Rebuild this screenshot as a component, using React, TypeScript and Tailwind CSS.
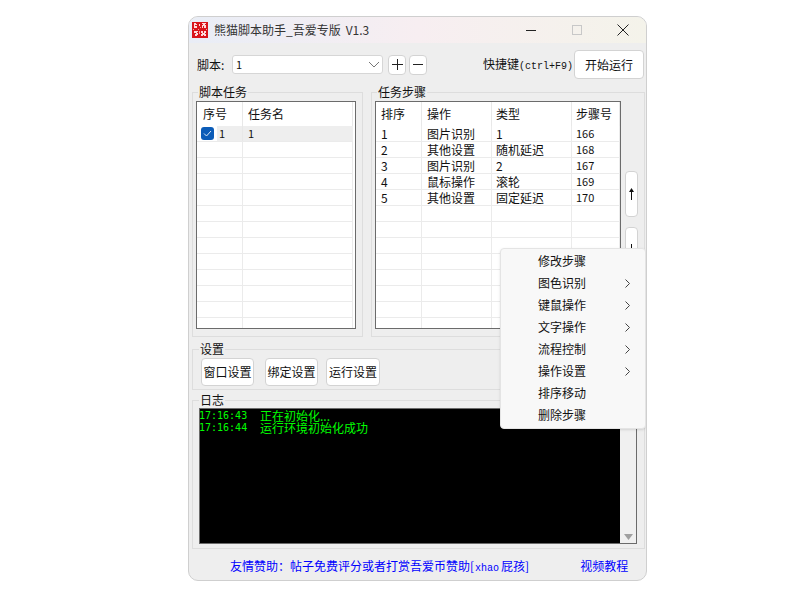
import React from "react";

const font = { fontFamily: '"Noto Sans CJK SC", "Liberation Sans", sans-serif' };
const mono = { fontFamily: '"Liberation Mono", monospace' };
const logMono = { fontFamily: '"DejaVu Sans Mono", monospace' };

function Legend({ children, className = "" }: { children: React.ReactNode; className?: string }) {
  return <legend className={"px-[1px] h-[14px] leading-[14px] text-[12px] text-[#111] " + className}>{children}</legend>;
}

function Btn({ children, className = "" }: { children?: React.ReactNode; className?: string }) {
  return (
    <button className={"flex items-center justify-center bg-white border border-[#d3d3d3] rounded-[4px] text-[12px] text-[#111] " + className}>
      {children}
    </button>
  );
}

const stepRows = [
  ["1", "图片识别", "1", "166"],
  ["2", "其他设置", "随机延迟", "168"],
  ["3", "图片识别", "2", "167"],
  ["4", "鼠标操作", "滚轮", "169"],
  ["5", "其他设置", "固定延迟", "170"],
  ...Array.from({ length: 8 }, () => ["", "", "", ""]),
];

function TaskTable() {
  return (
    <div className="w-[160px] h-[228px] border border-[#6b6b6b] bg-white overflow-hidden">
      <div className="flex h-[24px] w-[156px] border-r border-[#e8e8e8] text-[12px] leading-[24px]">
        <div className="w-[46px] pl-[6px] border-r border-[#e8e8e8]">序号</div>
        <div className="pl-[5px]">任务名</div>
      </div>
      <div className="flex h-[16px] w-[156px] border-b border-[#ebebeb] text-[11px] leading-[15px]">
        <div className="w-[20px] flex pl-[4px] pt-[1px] shrink-0">
          <div className="w-[13px] h-[13px] rounded-[3px] bg-[#0b5cb8] flex items-center justify-center">
            <svg width="9" height="7" viewBox="0 0 9 7" fill="none"><path d="M1 3.5 3.5 6 8 1" stroke="#dbe9f7" strokeWidth="1" /></svg>
          </div>
        </div>
        <div className="w-[26px] bg-[#eeeeee] pl-[2px] border-r border-[#e8e8e8]">1</div>
        <div className="flex-1 bg-[#eeeeee] pl-[5px]">1</div>
      </div>
      {Array.from({ length: 12 }, (_, i) => (
        <div key={i} className="flex h-[16px] w-[156px] border-b border-r border-[#ebebeb]">
          <div className="w-[46px] border-r border-[#ebebeb]" />
        </div>
      ))}
    </div>
  );
}

function StepTable() {
  return (
    <div className="w-[246px] h-[228px] border border-[#6b6b6b] bg-white overflow-hidden">
      <div className="flex h-[24px] text-[12px] leading-[24px]">
        <div className="w-[46px] pl-[5px] border-r border-[#e8e8e8]">排序</div>
        <div className="w-[70px] pl-[5px] border-r border-[#e8e8e8]">操作</div>
        <div className="w-[80px] pl-[4px] border-r border-[#e8e8e8]">类型</div>
        <div className="w-[48px] pl-[4px] border-r border-[#e8e8e8]">步骤号</div>
      </div>
      {stepRows.map((r, i) => (
        <div key={i} className="flex h-[16px] text-[12px] leading-[15px] border-b border-[#ebebeb]">
          <div className="w-[46px] pl-[5px] border-r border-[#ebebeb]">{r[0]}</div>
          <div className="w-[70px] pl-[5px] border-r border-[#ebebeb]">{r[1]}</div>
          <div className="w-[80px] pl-[4px] border-r border-[#ebebeb]">{r[2]}</div>
          <div className="w-[48px] pl-[4px] border-r border-[#ebebeb] text-[11px]">{r[3]}</div>
        </div>
      ))}
    </div>
  );
}

const menuItems: [string, boolean][] = [
  ["修改步骤", false],
  ["图色识别", true],
  ["键鼠操作", true],
  ["文字操作", true],
  ["流程控制", true],
  ["操作设置", true],
  ["排序移动", false],
  ["删除步骤", false],
];

function Logo() {
  return (
    <svg width="16" height="16" viewBox="0 0 16 16">
      <rect width="16" height="16" fill="#d9141b" />
      <path d="M2 1h2v1h1v1H3v1h2v2H2zM7 2h1v2H7zM10 1h4v1h-1v1h1v3h-2V4h-1v2h-1V3h1V2h-1zM2 9h4v1H5v1h1v2H5v1H3v-2h1v-1H2zM9 9h2v2h1V9h2v2h-1v1h1v2h-2v-1h-1v1H9v-2h1v-1H9z" fill="#ffd9d9" />
      <path d="M6 7h1v1H6zM8 5h1v1H8zM7 9h1v3H7zM1 7h1v1H1zM14 7h1v1h-1z" fill="#f7a0a0" />
    </svg>
  );
}

export default function App() {
  return (
    <div className="w-[802px] h-[596px] bg-white pt-[16px] pl-[188px] text-[#111]" style={font}>
      <div className="relative w-[459px] h-[565px] rounded-[10px] border border-[#cfcfcf] bg-[#eeeeee] overflow-hidden">
        <div className="flex items-center h-[26px] bg-gradient-to-r from-[#e9edf6] via-[#f7eef1] to-[#f4f3ea] pl-[3px]">
          <Logo />
          <span className="ml-[6px] text-[12px] text-[#333] whitespace-nowrap">熊猫脚本助手_吾爱专版</span>
          <span className="ml-[5px] text-[12px] text-[#333]">V1.3</span>
          <div className="flex-1" />
          <div className="w-[10px] h-[1px] bg-[#222] mr-[36px]" />
          <div className="w-[10px] h-[10px] border border-[#c8c8c8] mr-[35px]" />
          <svg width="12" height="12" viewBox="0 0 12 12" className="mr-[17px]"><path d="M.5.5l11 11M11.5.5l-11 11" stroke="#222" strokeWidth="1" /></svg>
        </div>

        <div className="flex items-center h-[29px] mt-[7px] pl-[8px]">
          <span className="text-[12px] w-[36px] shrink-0">脚本:</span>
          <div className="flex items-center justify-between w-[151px] h-[19px] bg-white border border-[#d6d6d6] rounded-[3px] pl-[3px] pr-[2px] text-[11px] -ml-[1px]">
            <span>1</span>
            <svg width="12" height="7" viewBox="0 0 12 7" fill="none"><path d="M1 1l5 5 5-5" stroke="#777" /></svg>
          </div>
          <Btn className="w-[18px] h-[20px] ml-[5px]">
            <svg width="11" height="11" viewBox="0 0 11 11"><path d="M5.5 0v11M0 5.5h11" stroke="#222" /></svg>
          </Btn>
          <Btn className="w-[18px] h-[20px] ml-[3px]">
            <svg width="10" height="1" viewBox="0 0 10 1"><path d="M0 .5h10" stroke="#222" /></svg>
          </Btn>
          <span className="ml-[56px] text-[12px] whitespace-nowrap">快捷键<span style={mono} className="text-[10px]">(ctrl+F9)</span></span>
          <Btn className="w-[70px] h-[29px] ml-[1px]">开始运行</Btn>
        </div>

        <div className="flex pl-[3px] mt-[6px] gap-[8px]">
          <fieldset className="w-[171px] h-[252px] border border-[#dddddd] pl-[3px] pt-[2px]">
            <Legend className="ml-[2px]">脚本任务</Legend>
            <TaskTable />
          </fieldset>
          <fieldset className="w-[274px] h-[252px] border border-[#dddddd] pl-[3px] pt-[2px]">
            <Legend className="ml-[2px]">任务步骤</Legend>
            <div className="flex">
              <StepTable />
              <div className="flex flex-col ml-[4px] mt-[70px] gap-[10px]">
                <Btn className="w-[13px] h-[46px]">
                  <svg width="5" height="12" viewBox="0 0 5 12"><path d="M2.5 0 5 4H3v8H2V4H0z" fill="#111" /></svg>
                </Btn>
                <Btn className="w-[13px] h-[46px]">
                  <svg width="5" height="12" viewBox="0 0 5 12"><path d="M2.5 12 5 8H3V0H2v8H0z" fill="#111" /></svg>
                </Btn>
              </div>
            </div>
          </fieldset>
        </div>

        <fieldset className="w-[453px] h-[48px] ml-[3px] mt-[5px] border border-[#dddddd] pl-[8px]">
          <Legend className="-ml-[2px]">设置</Legend>
          <div className="flex mt-[2px]">
            <Btn className="w-[53px] h-[28px]">窗口设置</Btn>
            <Btn className="w-[53px] h-[28px] ml-[11px]">绑定设置</Btn>
            <Btn className="w-[54px] h-[28px] ml-[8px]">运行设置</Btn>
          </div>
        </fieldset>

        <fieldset className="w-[453px] h-[156px] ml-[3px] mt-[3px] border border-[#dddddd] pl-[6px]">
          <Legend className="ml-[0px]">日志</Legend>
          <div className="flex w-[438px] h-[136px] border border-[#6b6b6b] mt-[1px]">
            <div className="w-[420px] bg-black text-[#00ff00] text-[12px] leading-[12px] pt-[1px] whitespace-pre">
              <div className="flex items-center"><span style={logMono} className="w-[60px] text-[10px] -ml-[1px] mr-[1px]">17:16:43</span>正在初始化...</div>
              <div className="flex items-center"><span style={logMono} className="w-[60px] text-[10px] -ml-[1px] mr-[1px]">17:16:44</span>运行环境初始化成功</div>
            </div>
            <div className="flex-1 bg-[#f0f0f0] flex items-end justify-center pb-[3px]">
              <svg width="9" height="6" viewBox="0 0 9 6"><path d="M0 0h9L4.5 6z" fill="#a0a0a0" /></svg>
            </div>
          </div>
        </fieldset>

        <div className="flex items-center h-[30px] mt-[2px] text-[12px] text-[#0000ff] pl-[41px]">
          <span className="whitespace-nowrap">友情赞助：帖子免费评分或者打赏吾爱币赞助[<span style={mono} className="text-[10px] ml-[1px] mr-[2px]">xhao</span>屁孩]</span>
          <span className="ml-[51px] whitespace-nowrap">视频教程</span>
        </div>

        <div className="absolute left-[311px] top-[231px] w-[146px] h-[181px] bg-[#f8f8f8] border border-[#e4e4e4] rounded-[4px] py-[1px] text-[12px] shadow-sm">
          {menuItems.map(([label, sub]) => (
            <div key={label} className="flex items-center h-[22px] pl-[37px] pr-[15px] justify-between">
              <span>{label}</span>
              {sub && <svg width="5" height="9" viewBox="0 0 5 9" fill="none"><path d="M.5.5l4 4-4 4" stroke="#444" /></svg>}
            </div>
          ))}
        </div>
      </div>
    </div>
  );
}
